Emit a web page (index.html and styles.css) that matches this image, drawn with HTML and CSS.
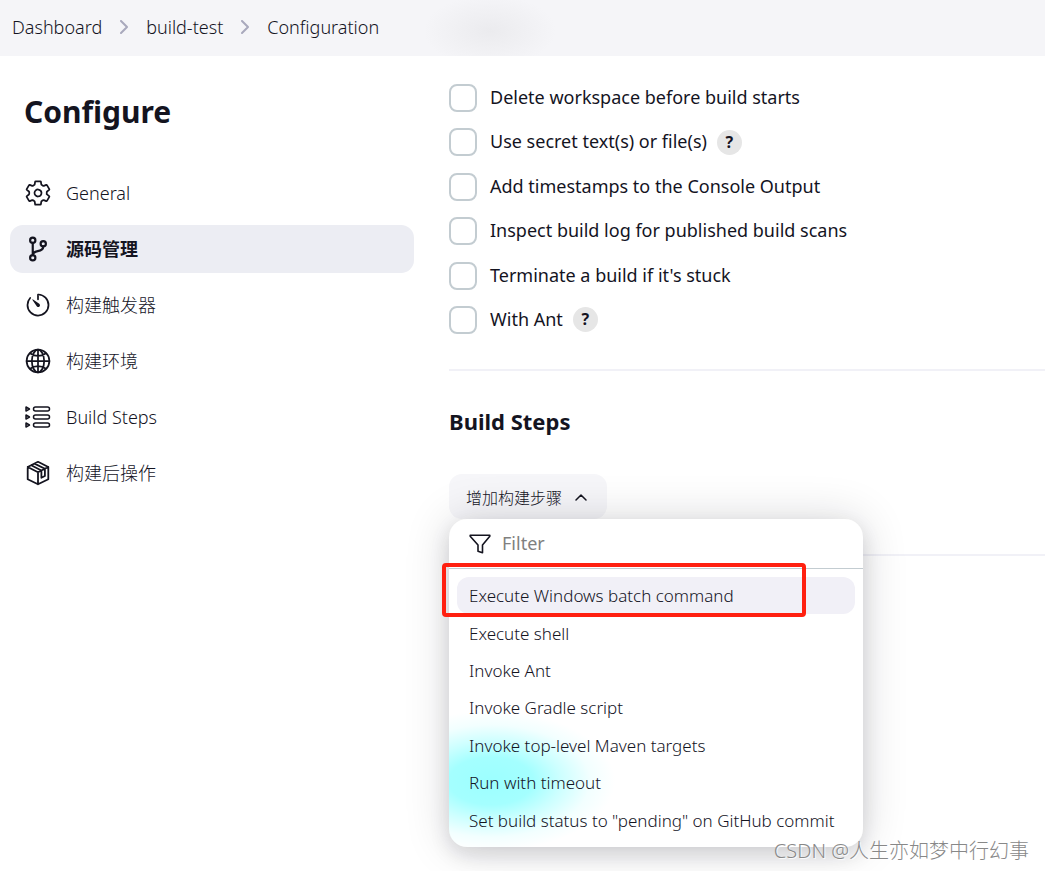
FILE: index.html
```html
<!DOCTYPE html>
<html lang="en">

<head>
    <meta charset="UTF-8">
    <meta name="viewport" content="width=device-width, initial-scale=1.0">
    <title>build-test Config</title>
    <link rel="stylesheet" href="styles.css">
</head>

<body>

    <nav class="breadcrumbs">
        <a href="#">Dashboard</a>
        <svg class="chevron" viewBox="0 0 8 14"><path d="M1 1l6 6-6 6" /></svg>
        <a href="#">build-test</a>
        <svg class="chevron" viewBox="0 0 8 14"><path d="M1 1l6 6-6 6" /></svg>
        <a href="#">Configuration</a>
    </nav>

    <div class="page">
        <aside class="side-panel">
            <h1>Configure</h1>
            <nav class="tasks">
                <a class="task" href="#">
                    <svg class="icon" viewBox="0 0 512 512"><path d="M262.29 192.31a64 64 0 1057.4 57.4 64.13 64.13 0 00-57.4-57.4zM416.39 256a154.34 154.34 0 01-1.53 20.79l45.21 35.46a10.81 10.81 0 012.45 13.75l-42.77 74a10.81 10.81 0 01-13.14 4.59l-44.9-18.08a16.11 16.11 0 00-15.17 1.75A164.48 164.48 0 01325 400.8a15.94 15.94 0 00-8.82 12.14l-6.73 47.89a11.08 11.08 0 01-10.68 9.17h-85.54a11.11 11.11 0 01-10.69-8.87l-6.72-47.82a16.07 16.07 0 00-9-12.22 155.3 155.3 0 01-21.46-12.57 16 16 0 00-15.11-1.71l-44.89 18.07a10.81 10.81 0 01-13.14-4.58l-42.77-74a10.8 10.8 0 012.45-13.75l38.21-30a16.05 16.05 0 006-14.08c-.36-4.17-.58-8.33-.58-12.5s.21-8.27.58-12.35a16 16 0 00-6.07-13.94l-38.19-30A10.81 10.81 0 0149.48 186l42.77-74a10.81 10.81 0 0113.14-4.59l44.9 18.08a16.11 16.11 0 0015.17-1.75A164.48 164.48 0 01187 111.2a15.94 15.94 0 008.82-12.14l6.73-47.89A11.08 11.08 0 01213.23 42h85.54a11.11 11.11 0 0110.69 8.87l6.72 47.82a16.07 16.07 0 009 12.22 155.3 155.3 0 0121.46 12.57 16 16 0 0015.11 1.71l44.89-18.07a10.81 10.81 0 0113.14 4.58l42.77 74a10.8 10.8 0 01-2.45 13.75l-38.21 30a16.05 16.05 0 00-6.05 14.08c.33 4.14.55 8.3.55 12.47z" /></svg>
                    <span>General</span>
                </a>
                <a class="task active" href="#">
                    <svg class="icon branch" viewBox="0 0 512 512"><circle cx="160" cy="96" r="48" /><circle cx="160" cy="416" r="48" /><circle cx="352" cy="160" r="48" /><path d="M160 368V144M352 208c0 128-192 48-192 160" /></svg>
                    <span>源码管理</span>
                </a>
                <a class="task" href="#">
                    <svg class="icon" viewBox="0 0 512 512"><path d="M112.91 128A191.85 191.85 0 0064 254c-1.18 106.35 85.65 193.8 192 194 106.2.2 192-85.83 192-192 0-104.54-83.55-189.61-187.5-192a4.36 4.36 0 00-4.5 4.37V152" /><path class="solid" d="M233.38 278.63l-79-113a8.13 8.13 0 0111.32-11.32l113 79a32.5 32.5 0 01-37.25 53.26 33.21 33.21 0 01-8.07-7.94z" /></svg>
                    <span>构建触发器</span>
                </a>
                <a class="task" href="#">
                    <svg class="icon" viewBox="0 0 512 512"><circle cx="256" cy="256" r="208" /><path d="M256 48c-58.07 0-112.67 93.13-112.67 208S197.93 464 256 464s112.67-93.13 112.67-208S314.07 48 256 48zM117.33 117.33c38.24 27.15 86.38 43.34 138.67 43.34s100.43-16.19 138.67-43.34M394.67 394.67c-38.24-27.15-86.38-43.34-138.67-43.34s-100.43 16.19-138.67 43.34M256 48v416M464 256H48" /></svg>
                    <span>构建环境</span>
                </a>
                <a class="task" href="#">
                    <svg class="icon steps" viewBox="0 0 28 28"><path d="M2 4v4l3.500-2zM2 12v4l3.500-2zM2 20v4l3.500-2z" /><rect x="9.500" y="4" width="16" height="4" rx="2" /><rect x="9.500" y="12" width="16" height="4" rx="2" /><rect x="9.500" y="20" width="16" height="4" rx="2" /></svg>
                    <span>Build Steps</span>
                </a>
                <a class="task" href="#">
                    <svg class="icon box" viewBox="0 0 28 28"><path d="M14 2.800L24.300 8v12.200L14 25.300 3.700 20.200V8zM3.700 8L14 13.200 24.300 8M14 13.200v12.100M7.200 6.300l10.200 5.200v7.300l3.500-1.800V9.700L10.500 4.600" /></svg>
                    <span>构建后操作</span>
                </a>
            </nav>
        </aside>

        <main class="content">
            <ul class="options">
                <li>
                    <input type="checkbox" id="cleanup">
                    <label for="cleanup">Delete workspace before build starts</label>
                </li>
                <li>
                    <input type="checkbox" id="secrets">
                    <label for="secrets">Use secret text(s) or file(s)</label>
                    <button type="button" class="help">?</button>
                </li>
                <li>
                    <input type="checkbox" id="timestamps">
                    <label for="timestamps">Add timestamps to the Console Output</label>
                </li>
                <li>
                    <input type="checkbox" id="scans">
                    <label for="scans">Inspect build log for published build scans</label>
                </li>
                <li>
                    <input type="checkbox" id="timeout">
                    <label for="timeout">Terminate a build if it's stuck</label>
                </li>
                <li>
                    <input type="checkbox" id="ant">
                    <label for="ant">With Ant</label>
                    <button type="button" class="help">?</button>
                </li>
            </ul>

            <section class="build-steps">
                <h2>Build Steps</h2>
                <div class="dropdown">
                    <button type="button" class="add-step">
                        增加构建步骤
                        <svg class="caret" viewBox="0 0 12 8"><path d="M1 7l5-5 5 5" /></svg>
                    </button>

                    <div class="menu">
                        <div class="filter">
                            <svg class="funnel" viewBox="0 0 22 20"><path d="M1.200 1.200h19.600v1L13.500 11v7.800l-4.500-1.600V11L1.200 2.200z" /></svg>
                            <input type="text" placeholder="Filter" aria-label="Filter">
                        </div>
                        <div class="menu-items">
                            <button type="button" class="selected">Execute Windows batch command</button>
                            <button type="button">Execute shell</button>
                            <button type="button">Invoke Ant</button>
                            <button type="button">Invoke Gradle script</button>
                            <button type="button">Invoke top-level Maven targets</button>
                            <button type="button">Run with timeout</button>
                            <button type="button">Set build status to "pending" on GitHub commit</button>
                        </div>
                        <div class="highlight"></div>
                    </div>
                </div>
            </section>
            <section class="post-build"></section>
        </main>
    </div>

    <div class="watermark">CSDN @人生亦如梦中行幻事</div>

</body>

</html>
```
FILE: styles.css
```css
* {
    box-sizing: border-box;
}

body {
    margin: 0;
    min-height: 100vh;
    position: relative;
    font-family: "Noto Sans", "Noto Sans CJK SC", sans-serif;
    font-size: 18px;
    font-weight: 300;
    line-height: 24px;
    color: #14141f;
    background-color: #fff;
}

a {
    color: inherit;
    text-decoration: none;
}

button,
input {
    font-family: inherit;
    font-weight: inherit;
    color: inherit;
    margin: 0;
}

svg {
    fill: none;
    stroke: currentColor;
    stroke-linecap: round;
    stroke-linejoin: round;
    flex-shrink: 0;
}

/* Breadcrumbs */
.breadcrumbs {
    display: flex;
    align-items: center;
    gap: 18px;
    height: 56px;
    padding: 0 12px 2px;
    background: radial-gradient(66px 36px at 490px 31px, #ebebee, #f5f5f8) #f5f5f8;
}

.chevron {
    width: 8px;
    height: 14px;
    stroke: #a9a9bd;
    stroke-width: 2;
}

/* Layout */
.page {
    display: grid;
    grid-template-columns: 404px 1fr;
    column-gap: 35px;
    padding-left: 10px;
}

.side-panel h1 {
    margin: 36px 14px 37px;
    font-size: 30px;
    line-height: 40px;
}

.tasks {
    display: flex;
    flex-direction: column;
    gap: 8px;
}

.task {
    display: flex;
    align-items: center;
    gap: 14px;
    height: 48px;
    padding: 0 14px;
    border-radius: 13px;
}

.task.active {
    background-color: #ecedf3;
    font-weight: 700;
}

.icon {
    width: 28px;
    height: 28px;
    stroke-width: 32;
}

.icon .solid {
    fill: currentColor;
    stroke: none;
}

.icon.branch {
    stroke-width: 40;
}

.icon.steps {
    stroke-width: 1.5;
}

.icon.box {
    stroke-width: 1.8;
}

/* Checkboxes */
.options {
    list-style: none;
    display: grid;
    align-content: space-between;
    min-height: 250px;
    margin: 0;
    padding: 0;
    font-weight: 400;
}

.content {
    padding-top: 28px;
}

.options li {
    display: flex;
    align-items: center;
    height: 28px;
}

.options label {
    padding-bottom: 2px;
}

.options input {
    appearance: none;
    width: 28px;
    height: 28px;
    margin-right: 13px;
    border: 2px solid #c3ccd1;
    border-radius: 8px;
    background-color: #fff;
}

.help {
    width: 25px;
    height: 25px;
    margin-left: 10px;
    padding: 0;
    border: none;
    border-radius: 50%;
    background-color: #e6e6e6;
    font-size: 16px;
    font-weight: 700;
    line-height: 25px;
}

/* Build steps */
.build-steps {
    margin-top: 35px;
    padding: 35px 0;
    border-top: 2px solid #f1f1f7;
}

.build-steps h2 {
    margin: 0 0 38px;
    font-size: 22px;
    line-height: 30px;
}

.post-build {
    border-top: 2px solid #f1f1f7;
}

.dropdown {
    position: relative;
}

.add-step {
    display: flex;
    align-items: center;
    gap: 13px;
    height: 45px;
    padding: 0 20px 0 17px;
    border: none;
    border-radius: 13px;
    background-color: #f6f6f9;
    font-size: 16px;
}

.caret {
    width: 12px;
    height: 8px;
    stroke-width: 1.5;
}

.menu {
    position: absolute;
    top: 45px;
    left: 0;
    width: 414px;
    border-radius: 18px;
    background: radial-gradient(124px 70px at 42px 262px, #9cffff, #a4ffff 34%, #ccffff 56%, #f2ffff 80%, #fff) #fff;
    box-shadow: 0 8px 20px rgba(20, 20, 31, 0.12), 0 0 46px rgba(20, 20, 31, 0.16);
}

.filter {
    display: flex;
    align-items: center;
    gap: 11px;
    height: 50px;
    padding: 0 20px;
    border-bottom: 1px solid #c3ccd1;
}

.funnel {
    width: 22px;
    height: 20px;
    stroke-width: 1.6;
}

.filter input {
    width: 100%;
    padding: 0 0 2px;
    border: none;
    outline: none;
    background: none;
    font-size: 18px;
    font-weight: 400;
}

.filter input::placeholder {
    color: #808080;
}

.menu-items {
    display: grid;
    grid-auto-rows: 1fr;
    min-height: 278px;
    padding: 8px;
}

.menu-items button {
    padding: 0 12px;
    border: none;
    border-radius: 12px;
    background: none;
    font-size: 17px;
    text-align: left;
    white-space: nowrap;
}

.menu-items .selected {
    background-color: #f1f0f7;
}

/* Red marker around the chosen step */
.highlight {
    position: absolute;
    top: 44px;
    left: -7px;
    width: 364px;
    height: 54px;
    border: 4px solid #ff2010;
    border-radius: 4px;
    pointer-events: none;
}

.watermark {
    position: absolute;
    right: 16px;
    bottom: 6px;
    font-size: 20px;
    line-height: 28px;
    color: #888;
    text-shadow: 1px 1px 1px #fff;
}
```
